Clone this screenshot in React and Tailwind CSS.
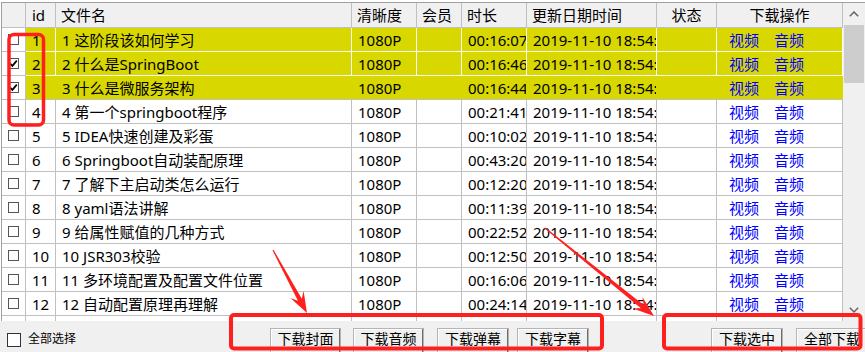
import React from 'react';

const rows = [
  { id: 1, name: '1 这阶段该如何学习', dur: '00:16:07', sel: 1, checked: false },
  { id: 2, name: '2 什么是SpringBoot', dur: '00:16:46', sel: 1, checked: true },
  { id: 3, name: '3 什么是微服务架构', dur: '00:16:44', sel: 2, checked: true },
  { id: 4, name: '4 第一个springboot程序', dur: '00:21:41', sel: 0, checked: false },
  { id: 5, name: '5 IDEA快速创建及彩蛋', dur: '00:10:02', sel: 0, checked: false },
  { id: 6, name: '6 Springboot自动装配原理', dur: '00:43:20', sel: 0, checked: false },
  { id: 7, name: '7 了解下主启动类怎么运行', dur: '00:12:20', sel: 0, checked: false },
  { id: 8, name: '8 yaml语法讲解', dur: '00:11:39', sel: 0, checked: false },
  { id: 9, name: '9 给属性赋值的几种方式', dur: '00:22:52', sel: 0, checked: false },
  { id: 10, name: '10 JSR303校验', dur: '00:12:50', sel: 0, checked: false },
  { id: 11, name: '11 多环境配置及配置文件位置', dur: '00:16:06', sel: 0, checked: false },
  { id: 12, name: '12 自动配置原理再理解', dur: '00:24:14', sel: 0, checked: false },
  { id: 13, name: '13 配置文件占位符', dur: '00:09:31', sel: 0, checked: false },
];

const NORMAL = 'border-r border-b border-[#c0c0c0] bg-white';
const SEL1 = 'border-r border-b border-white bg-[#d8d800]';
const SEL2 = 'border-r border-b border-[#d8d800] border-b-[#c0c0c0] bg-[#d8d800]';

function RowCheck({ checked }) {
  return (
    <span className="w-[11px] h-[11px] border border-[#555] bg-white flex items-center justify-center">
      {checked && (
        <svg width="9" height="9" viewBox="0 0 9 9">
          <path d="M1.2 4.6 L3.4 6.9 L7.8 1.6" fill="none" stroke="#000" strokeWidth="1.7" />
        </svg>
      )}
    </span>
  );
}

function Row({ r }) {
  const c = r.sel === 1 ? SEL1 : r.sel === 2 ? SEL2 : NORMAL;
  const cell = 'h-full flex items-center overflow-hidden whitespace-nowrap shrink-0 ' + c;
  return (
    <div className="flex h-[24px] shrink-0">
      <div className="w-[24px] h-full flex items-center justify-center shrink-0 border-r border-b border-[#c0c0c0] bg-white">
        <RowCheck checked={r.checked} />
      </div>
      <div className={'w-[30px] pl-[6px] ' + cell}>{r.id}</div>
      <div className={'w-[296px] pl-[6px] ' + cell}>{r.name}</div>
      <div className={'w-[65px] pl-[6px] ' + cell}>1080P</div>
      <div className={'w-[45px] ' + cell}></div>
      <div className={'w-[65px] pl-[6px] ' + cell}>{r.dur}</div>
      <div className={'w-[130px] pl-[6px] ' + cell}>2019-11-10 18:54:36</div>
      <div className={'w-[60px] ' + cell}></div>
      <div className={'w-[126px] pl-[12px] gap-[15px] text-[#0000ff] ' + cell}>
        <span>视频</span>
        <span>音频</span>
      </div>
    </div>
  );
}

function arrowPts(sx, sy, tx, ty) {
  const dx = tx - sx, dy = ty - sy, L = Math.hypot(dx, dy);
  const ux = dx / L, uy = dy / L, nx = -uy, ny = ux;
  const p = (a, b) => `${(a).toFixed(1)},${(b).toFixed(1)}`;
  return [
    p(sx + nx * 0.6, sy + ny * 0.6),
    p(tx - ux * 15 + nx * 2.2, ty - uy * 15 + ny * 2.2),
    p(tx - ux * 21 + nx * 7.5, ty - uy * 21 + ny * 7.5),
    p(tx, ty),
    p(tx - ux * 21 - nx * 7.5, ty - uy * 21 - ny * 7.5),
    p(tx - ux * 15 - nx * 2.2, ty - uy * 15 - ny * 2.2),
    p(sx - nx * 0.6, sy - ny * 0.6),
  ].join(' ');
}

function Btn({ children, cls }) {
  return (
    <div
      className={
        'h-[26px] shrink-0 mt-[7px] text-center text-[14px] leading-[20px] text-black bg-[#f0f0f0] border border-[#b4b4b4] shadow-[inset_-1px_-1px_0_#6e6e6e,inset_1px_1px_0_#ffffff] ' +
        cls
      }
    >
      {children}
    </div>
  );
}

export default function App() {
  return (
    <div className="relative w-[865px] h-[352px] overflow-hidden bg-white text-black font-['Noto_Sans','Noto_Sans_CJK_SC',sans-serif]">
      <div className="flex flex-col w-[865px] h-[352px]">
        {/* table area */}
        <div className="flex h-[321px] w-[865px] shrink-0 pt-[2px] pl-[1px] bg-white overflow-hidden">
          <div className="flex flex-1 border-t border-l border-[#a0a0a0] overflow-hidden">
            <div className="w-[841px] shrink-0 flex flex-col text-[15px] leading-[20px] overflow-hidden">
              <div className="flex h-[25px] shrink-0 bg-[#f0f0f0]">
                <div className="w-[24px] h-full shrink-0 border-r border-b border-[#c0c0c0]"></div>
                <div className="w-[30px] h-full shrink-0 pl-[6px] flex items-center border-r border-b border-[#c0c0c0]">id</div>
                <div className="w-[296px] h-full shrink-0 pl-[5px] flex items-center border-r border-b border-[#c0c0c0]">文件名</div>
                <div className="w-[65px] h-full shrink-0 pl-[5px] flex items-center border-r border-b border-[#c0c0c0]">清晰度</div>
                <div className="w-[45px] h-full shrink-0 pl-[5px] flex items-center border-r border-b border-[#c0c0c0]">会员</div>
                <div className="w-[65px] h-full shrink-0 pl-[5px] flex items-center border-r border-b border-[#c0c0c0]">时长</div>
                <div className="w-[130px] h-full shrink-0 pl-[5px] flex items-center border-r border-b border-[#c0c0c0]">更新日期时间</div>
                <div className="w-[60px] h-full shrink-0 flex items-center justify-center border-r border-b border-[#c0c0c0]">状态</div>
                <div className="w-[126px] h-full shrink-0 flex items-center justify-center border-r border-b border-[#c0c0c0]">下载操作</div>
              </div>
              {rows.map((r) => (
                <Row key={r.id} r={r} />
              ))}
            </div>
            {/* scrollbar */}
            <div className="w-[22px] shrink-0 bg-[#f0f0f0] flex flex-col">
              <div className="h-[22px] shrink-0 flex items-center justify-center">
                <svg width="10" height="6" viewBox="0 0 10 6">
                  <polyline points="0.8,5.2 5,1 9.2,5.2" fill="none" stroke="#606060" strokeWidth="1.4" />
                </svg>
              </div>
              <div className="h-[58px] w-[20px] ml-[1px] shrink-0 bg-[#cdcdcd]"></div>
              <div className="flex-1"></div>
              <div className="h-[22px] shrink-0 flex items-center justify-center">
                <svg width="10" height="6" viewBox="0 0 10 6">
                  <polyline points="0.8,0.8 5,5 9.2,0.8" fill="none" stroke="#606060" strokeWidth="1.4" />
                </svg>
              </div>
            </div>
          </div>
        </div>
        {/* bottom panel */}
        <div className="flex items-start h-[31px] shrink-0 bg-[#f0f0f0]">
          <span className="ml-[7px] mt-[12px] w-[14px] h-[14px] shrink-0 border border-[#333] bg-white"></span>
          <span className="ml-[7px] mt-[11px] shrink-0 text-[12px] leading-[14px] whitespace-nowrap">全部选择</span>
          <Btn cls="ml-[194px] w-[71px]">下载封面</Btn>
          <Btn cls="ml-[12px] w-[71px]">下载音频</Btn>
          <Btn cls="ml-[13px] w-[72px]">下载弹幕</Btn>
          <Btn cls="ml-[8px] w-[72px]">下载字幕</Btn>
          <Btn cls="ml-[122px] w-[72px]">下载选中</Btn>
          <Btn cls="ml-[13px] w-[72px]">全部下载</Btn>
        </div>
      </div>

      {/* annotations */}
      <svg className="absolute left-0 top-0 pointer-events-none" width="865" height="352" viewBox="0 0 865 352">
        <rect x="9" y="34.5" width="34.5" height="90.5" rx="5" fill="none" stroke="#ff1f1f" strokeWidth="3.5" />
        <rect x="231" y="315" width="371" height="33.5" rx="3" fill="none" stroke="#ff1f1f" strokeWidth="4" />
        <rect x="664" y="315" width="196.5" height="33.5" rx="3" fill="none" stroke="#ff1f1f" strokeWidth="4" />
        <polygon points={arrowPts(273, 250, 307, 313)} fill="#ff1f1f" />
        <polygon points={arrowPts(545, 228, 654, 316)} fill="#ff1f1f" />
      </svg>
    </div>
  );
}
